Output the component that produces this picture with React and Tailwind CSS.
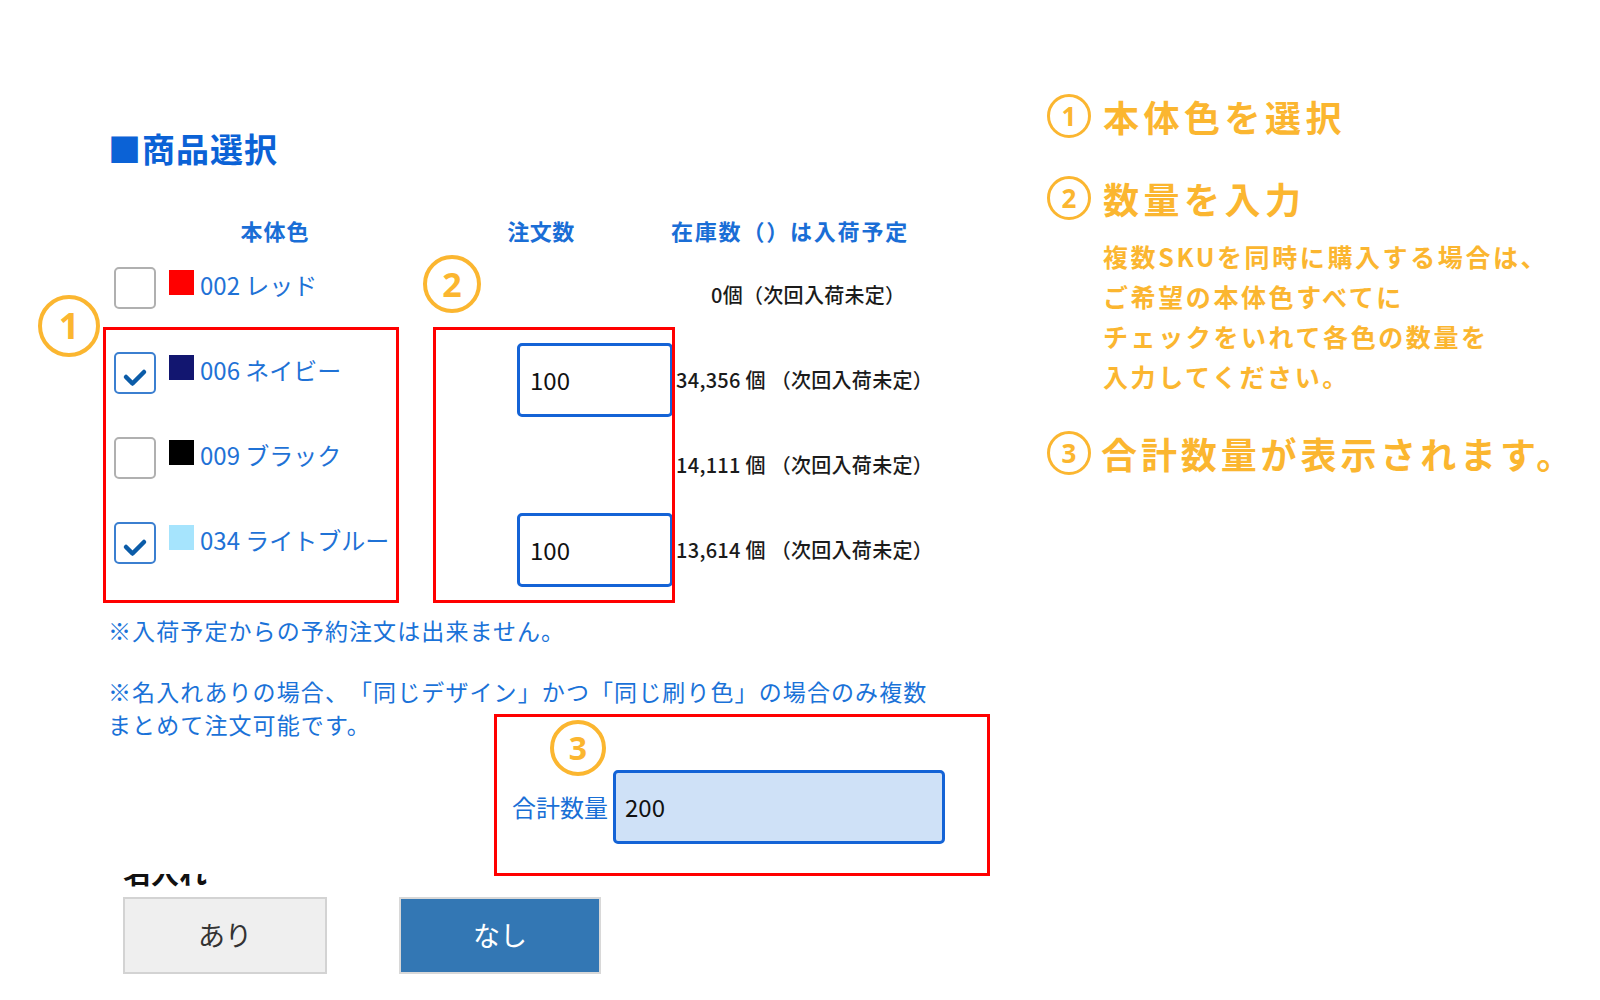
import React from 'react';

const rows = [
	{ code: '002 レッド', swatch: 'bg-[#ff0000]', checked: false, qty: null, stock: '0個（次回入荷未定）', first: true },
	{ code: '006 ネイビー', swatch: 'bg-[#121670]', checked: true, qty: '100', stock: '34,356 個 （次回入荷未定）' },
	{ code: '009 ブラック', swatch: 'bg-[#000000]', checked: false, qty: null, stock: '14,111 個 （次回入荷未定）' },
	{ code: '034 ライトブルー', swatch: 'bg-[#a6e4fd]', checked: true, qty: '100', stock: '13,614 個 （次回入荷未定）' },
];

const Checkbox = ({ checked }) => (
	<div
		className={
			checked
				? 'w-[42px] h-[42px] rounded-[5px] border-2 border-[#3b7fd0] bg-white flex items-center justify-center'
				: 'w-[42px] h-[42px] rounded-[5px] border-2 border-[#b0b0b0] bg-white'
		}
	>
		{checked && (
			<svg width="26" height="26" viewBox="0 0 26 26" className="mt-[8px]">
				<path d="M4 13 L10.5 19.5 L22 8" fill="none" stroke="#0b5ca8" strokeWidth="4.5" strokeLinecap="round" strokeLinejoin="round" />
			</svg>
		)}
	</div>
);

const Circled = ({ n, className }) => (
	<div className={`rounded-full border-[#fbb630] text-[#fbb630] flex items-center justify-center font-['Noto_Sans',sans-serif] font-bold ${className}`}>
		{n}
	</div>
);

const Row = ({ row }) => (
	<>
		<div className="h-[85px] flex items-center">
			<Checkbox checked={row.checked} />
			<div className="flex items-start ml-[13px] -mt-[6px]">
				<span className={`w-[25px] h-[25px] ${row.swatch}`} />
				<span className="ml-[6px] text-[24px] leading-[30px] text-[#1f72d6]">{row.code}</span>
			</div>
		</div>
		<div className="h-[85px] flex items-center justify-end pr-[3px]">
			{row.qty && (
				<div className="mt-[14px] w-[156px] h-[74px] rounded-[5px] border-[3px] border-[#1463d6] bg-white flex items-center pl-[10px] text-[24px] text-[#111]">
					{row.qty}
				</div>
			)}
		</div>
		<div className={row.first ? 'h-[85px] flex items-center pl-[35px]' : 'h-[85px] flex items-center'}>
			<span className="mt-[14px] text-[20px] font-medium text-[#1b1b1b] whitespace-pre tracking-[0.3px]">{row.stock}</span>
		</div>
	</>
);

export default function App() {
	return (
		<div className="relative w-[1600px] h-[1000px] overflow-hidden bg-white font-['Noto_Sans_CJK_JP',sans-serif] [text-spacing-trim:space-all]">
			<div className="flex">
				{/* form */}
				<div className="w-[1000px] pl-[108px] pt-[130px]">
					<h1 className="text-[33px] leading-[36px] font-bold text-[#0b62d6] tracking-[1px]">■商品選択</h1>
					<div className="mt-[49px] ml-[6px] grid grid-cols-[322px_240px_auto]">
						<div className="h-[30px] text-center text-[22px] leading-[30px] font-bold text-[#1a6ed6] tracking-[1px]">本体色</div>
						<div className="h-[30px] text-center pr-[30px] text-[22px] leading-[30px] font-bold text-[#1a6ed6] tracking-[0.5px]">注文数</div>
						<div className="h-[30px] -ml-[5px] text-[22px] leading-[30px] font-bold text-[#1a6ed6] tracking-[1.8px] whitespace-nowrap">在庫数（）は入荷予定</div>
						{rows.map((row, i) => (
							<Row key={i} row={row} />
						))}
					</div>
					<p className="mt-[29px] text-[23px] leading-[33px] text-[#1a72d8] tracking-[1.1px]">※入荷予定からの予約注文は出来ません。</p>
					<p className="mt-[28px] text-[23px] leading-[33px] text-[#1a72d8] tracking-[1.1px] whitespace-nowrap">
						※名入れありの場合、「同じデザイン」かつ「同じ刷り色」の場合のみ複数
						<br />
						まとめて注文可能です。
					</p>
					<div className="mt-[29px] ml-[404px] flex items-center">
						<span className="text-[24px] text-[#1a6fd6]">合計数量</span>
						<div className="ml-[5px] w-[332px] h-[74px] rounded-[5px] border-[3px] border-[#1463d6] bg-[#cfe1f7] flex items-center pl-[9px] text-[24px] text-[#111]">
							200
						</div>
					</div>
					<div className="mt-[30px] ml-[15px] h-[16px] overflow-hidden">
						<div className="-mt-[20px] text-[28px] leading-[36px] font-bold text-[#111]">名入れ</div>
					</div>
					<div className="mt-[7px] ml-[15px] flex gap-[72px]">
						<button className="w-[204px] h-[77px] bg-[#efefef] border-2 border-[#d3d3d3] text-[27px] text-[#333]">あり</button>
						<button className="w-[202px] h-[77px] bg-[#3377b4] border-2 border-[#d8d8d8] text-[27px] text-white">なし</button>
					</div>
				</div>

				{/* annotations */}
				<div className="pt-[92px] pl-[47px] text-[#fbb630]">
					<div className="flex items-center">
						<Circled n="1" className="w-[44px] h-[44px] border-[3px] text-[26px]" />
						<span className="ml-[12px] text-[36px] leading-[48px] font-bold tracking-[4.5px]">本体色を選択</span>
					</div>
					<div className="mt-[34px] flex items-center">
						<Circled n="2" className="w-[44px] h-[44px] border-[3px] text-[26px]" />
						<span className="ml-[12px] text-[36px] leading-[48px] font-bold tracking-[4.5px]">数量を入力</span>
					</div>
					<div className="mt-[14px] ml-[56px] text-[25px] leading-[40px] font-bold tracking-[2.6px]">
						<div>複数SKUを同時に購入する場合は、</div>
						<div>ご希望の本体色すべてに</div>
						<div>チェックをいれて各色の数量を</div>
						<div>入力してください。</div>
					</div>
					<div className="mt-[33px] flex items-center">
						<Circled n="3" className="w-[44px] h-[44px] border-[3px] text-[26px]" />
						<span className="ml-[10px] text-[36px] leading-[48px] font-bold tracking-[3.9px]">合計数量が表示されます。</span>
					</div>
				</div>
			</div>

			{/* overlay markup on the screenshot */}
			<div className="absolute left-[103px] top-[327px] w-[296px] h-[276px] border-[3px] border-[#ff0000]" />
			<div className="absolute left-[433px] top-[327px] w-[242px] h-[276px] border-[3px] border-[#ff0000]" />
			<div className="absolute left-[494px] top-[714px] w-[496px] h-[162px] border-[3px] border-[#ff0000]" />
			<Circled n="1" className="absolute left-[38px] top-[295px] w-[62px] h-[62px] border-4 text-[36px]" />
			<Circled n="2" className="absolute left-[423px] top-[255px] w-[58px] h-[58px] border-4 text-[34px]" />
			<Circled n="3" className="absolute left-[550px] top-[720px] w-[56px] h-[56px] border-4 text-[32px]" />
		</div>
	);
}
